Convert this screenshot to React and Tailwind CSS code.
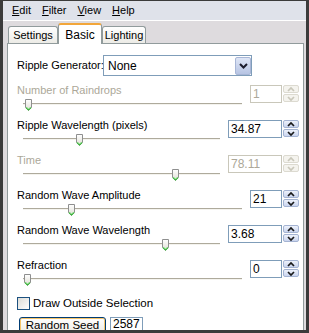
import React from "react";

const font = { fontFamily: '"Liberation Sans", Arial, sans-serif' };

function Thumb({ left }) {
  return (
    <svg
      className="absolute top-[2px]"
      style={{ left }}
      width="7"
      height="12"
      viewBox="0 0 7 12"
    >
      <defs>
        <linearGradient id="tg" x1="0" y1="0" x2="0" y2="1">
          <stop offset="0" stopColor="#ffffff" />
          <stop offset="1" stopColor="#dedcd2" />
        </linearGradient>
      </defs>
      <path d="M0.5 0.5 H6.5 V8.5 L3.5 11.5 L0.5 8.5 Z" fill="url(#tg)" stroke="#8e8f8f" />
      <path d="M1 8.5 L3.5 11 L6 8.5" fill="none" stroke="#3cba3c" strokeWidth="1.2" />
      <path d="M1.5 8 L3.5 10 L5.5 8" fill="none" stroke="#9be29b" strokeWidth="0.8" />
    </svg>
  );
}

function Arrow({ up, disabled }) {
  return (
    <svg width="14" height="7" viewBox="0 0 14 7">
      <polyline
        points={up ? "4,5 7,2 10,5" : "4,2 7,5 10,2"}
        fill="none"
        stroke={disabled ? "#c9c7ba" : "#1a1a1a"}
        strokeWidth="1.7"
      />
    </svg>
  );
}

function Spin({ value, wide, disabled }) {
  const btn = disabled
    ? "border-[#dcdad0] bg-[#f4f3ee]"
    : "border-[#a4b3d2] bg-linear-to-b from-[#eef2fb] to-[#c9d4ee]";
  return (
    <div className={`flex h-[18px] shrink-0 ${wide ? "w-[71px]" : "w-[49px]"}`}>
      <div
        className={`flex-1 border pl-[2px] text-[12px] leading-[16px] ${
          disabled
            ? "border-[#c9c7ba] text-[#aca899]"
            : "border-[#7f9db9] text-black"
        }`}
      >
        {value}
      </div>
      <div className="ml-[1px] flex w-[16px] flex-col gap-[1px]">
        <div className={`flex h-[8px] items-center justify-center rounded-[2px] border ${btn}`}>
          <Arrow up disabled={disabled} />
        </div>
        <div className={`flex h-[8px] items-center justify-center rounded-[2px] border ${btn}`}>
          <Arrow disabled={disabled} />
        </div>
      </div>
    </div>
  );
}

function SliderRow({ label, value, thumb, wide, disabled }) {
  return (
    <div className="flex h-[35px] items-start">
      <div className="-mt-[2px] mr-[8px] flex-1">
        <div
          className={`h-[14px] text-[11px] leading-[14px] whitespace-nowrap ${
            disabled ? "text-[#aca899]" : "text-black"
          }`}
        >
          {label}
        </div>
        <div className="relative h-[16px] pl-[6px] pt-[6px]">
          <div className="h-[2px] border-t border-[#aeaa9c] bg-[#f4f3ee]" />
          <Thumb left={thumb} />
        </div>
      </div>
      <Spin value={value} wide={wide} disabled={disabled} />
    </div>
  );
}

const rows = [
  { label: "Number of Raindrops", value: "1", thumb: 8, disabled: true },
  { label: "Ripple Wavelength (pixels)", value: "34.87", thumb: 59, wide: true },
  { label: "Time", value: "78.11", thumb: 155, wide: true, disabled: true },
  { label: "Random Wave Amplitude", value: "21", thumb: 51 },
  { label: "Random Wave Wavelength", value: "3.68", thumb: 145, wide: true },
  { label: "Refraction", value: "0", thumb: 7 },
];

export default function App() {
  return (
    <div
      style={font}
      className="flex h-[333px] w-[309px] flex-col overflow-hidden bg-[#3b3b3b] px-[3px] pb-[3px] pt-[1px] text-[11px] text-black"
    >
      {/* menu bar */}
      <div className="flex h-[20px] shrink-0 items-center gap-[11px] border-b border-white bg-[#dfe2ea] pl-[9px] text-[11px]">
        {["Edit", "Filter", "View", "Help"].map((m) => (
          <span key={m}>
            <span className="underline underline-offset-1">{m[0]}</span>
            {m.slice(1)}
          </span>
        ))}
      </div>

      <div className="flex flex-1 flex-col overflow-hidden bg-[#dedbde] pl-[4px] pr-[2px]">
        {/* tabs */}
        <div className="flex h-[22px] shrink-0 items-end pl-[1px]">
          <div className="flex h-[17px] w-[50px] items-center justify-center rounded-t-[3px] border border-b-0 border-[#919b9c] bg-linear-to-b from-white to-[#ecebe6]">
            Settings
          </div>
          <div className="relative z-10 -mb-[1px] flex h-[21px] w-[44px] items-start justify-center rounded-t-[3px] border-x border-t-2 border-x-[#919b9c] border-t-[#f2a63a] bg-white pt-[1px] text-[12px]">
            Basic
          </div>
          <div className="flex h-[17px] w-[44px] items-center justify-center rounded-t-[3px] border border-b-0 border-[#919b9c] bg-linear-to-b from-white to-[#ecebe6]">
            Lighting
          </div>
        </div>

        {/* panel */}
        <div className="flex-1 overflow-hidden border border-b-0 border-[#919b9c] bg-white pl-[9px] pr-[4px] pt-[11px]">
          <div className="flex h-[21px] items-center">
            <div className="w-[86px] text-[11px] whitespace-nowrap">Ripple Generator:</div>
            <div className="flex h-[21px] w-[149px] items-center border border-[#7f9db9]">
              <div className="flex-1 pl-[4px] text-[12px]">None</div>
              <div className="flex h-[18px] w-[16px] items-center justify-center rounded-[2px] border border-[#a8b6d6] bg-linear-to-b from-[#dfe6f6] to-[#b7c4e3]">
                <svg width="9" height="6" viewBox="0 0 9 6">
                  <polyline points="1,1 4.5,4.5 8,1" fill="none" stroke="#1c1c2c" strokeWidth="2" />
                </svg>
              </div>
            </div>
          </div>

          <div className="mt-[9px]">
            {rows.map((r) => (
              <SliderRow key={r.label} {...r} />
            ))}
          </div>

          <div className="mt-[2px] flex h-[13px] items-center">
            <div className="h-[13px] w-[13px] border border-[#1c5180] bg-linear-to-br from-[#dcdcd7] to-white" />
            <span className="ml-[3px] text-[11.5px]">Draw Outside Selection</span>
          </div>

          <div className="mt-[7px] flex items-start">
            <button className="ml-[2px] flex h-[23px] w-[87px] items-start justify-center rounded-[3px] border border-[#003c74] bg-linear-to-b from-white to-[#e6e3d6] pt-[1px] text-[11.5px] leading-[12px] shadow-[inset_0_0_0_1px_#f6c46a]">
              Random Seed
            </button>
            <div className="ml-[4px] h-[20px] w-[33px] border border-[#7f9db9] pl-[2px] text-[12px] leading-[12px]">
              2587
            </div>
          </div>
        </div>
      </div>
    </div>
  );
}
